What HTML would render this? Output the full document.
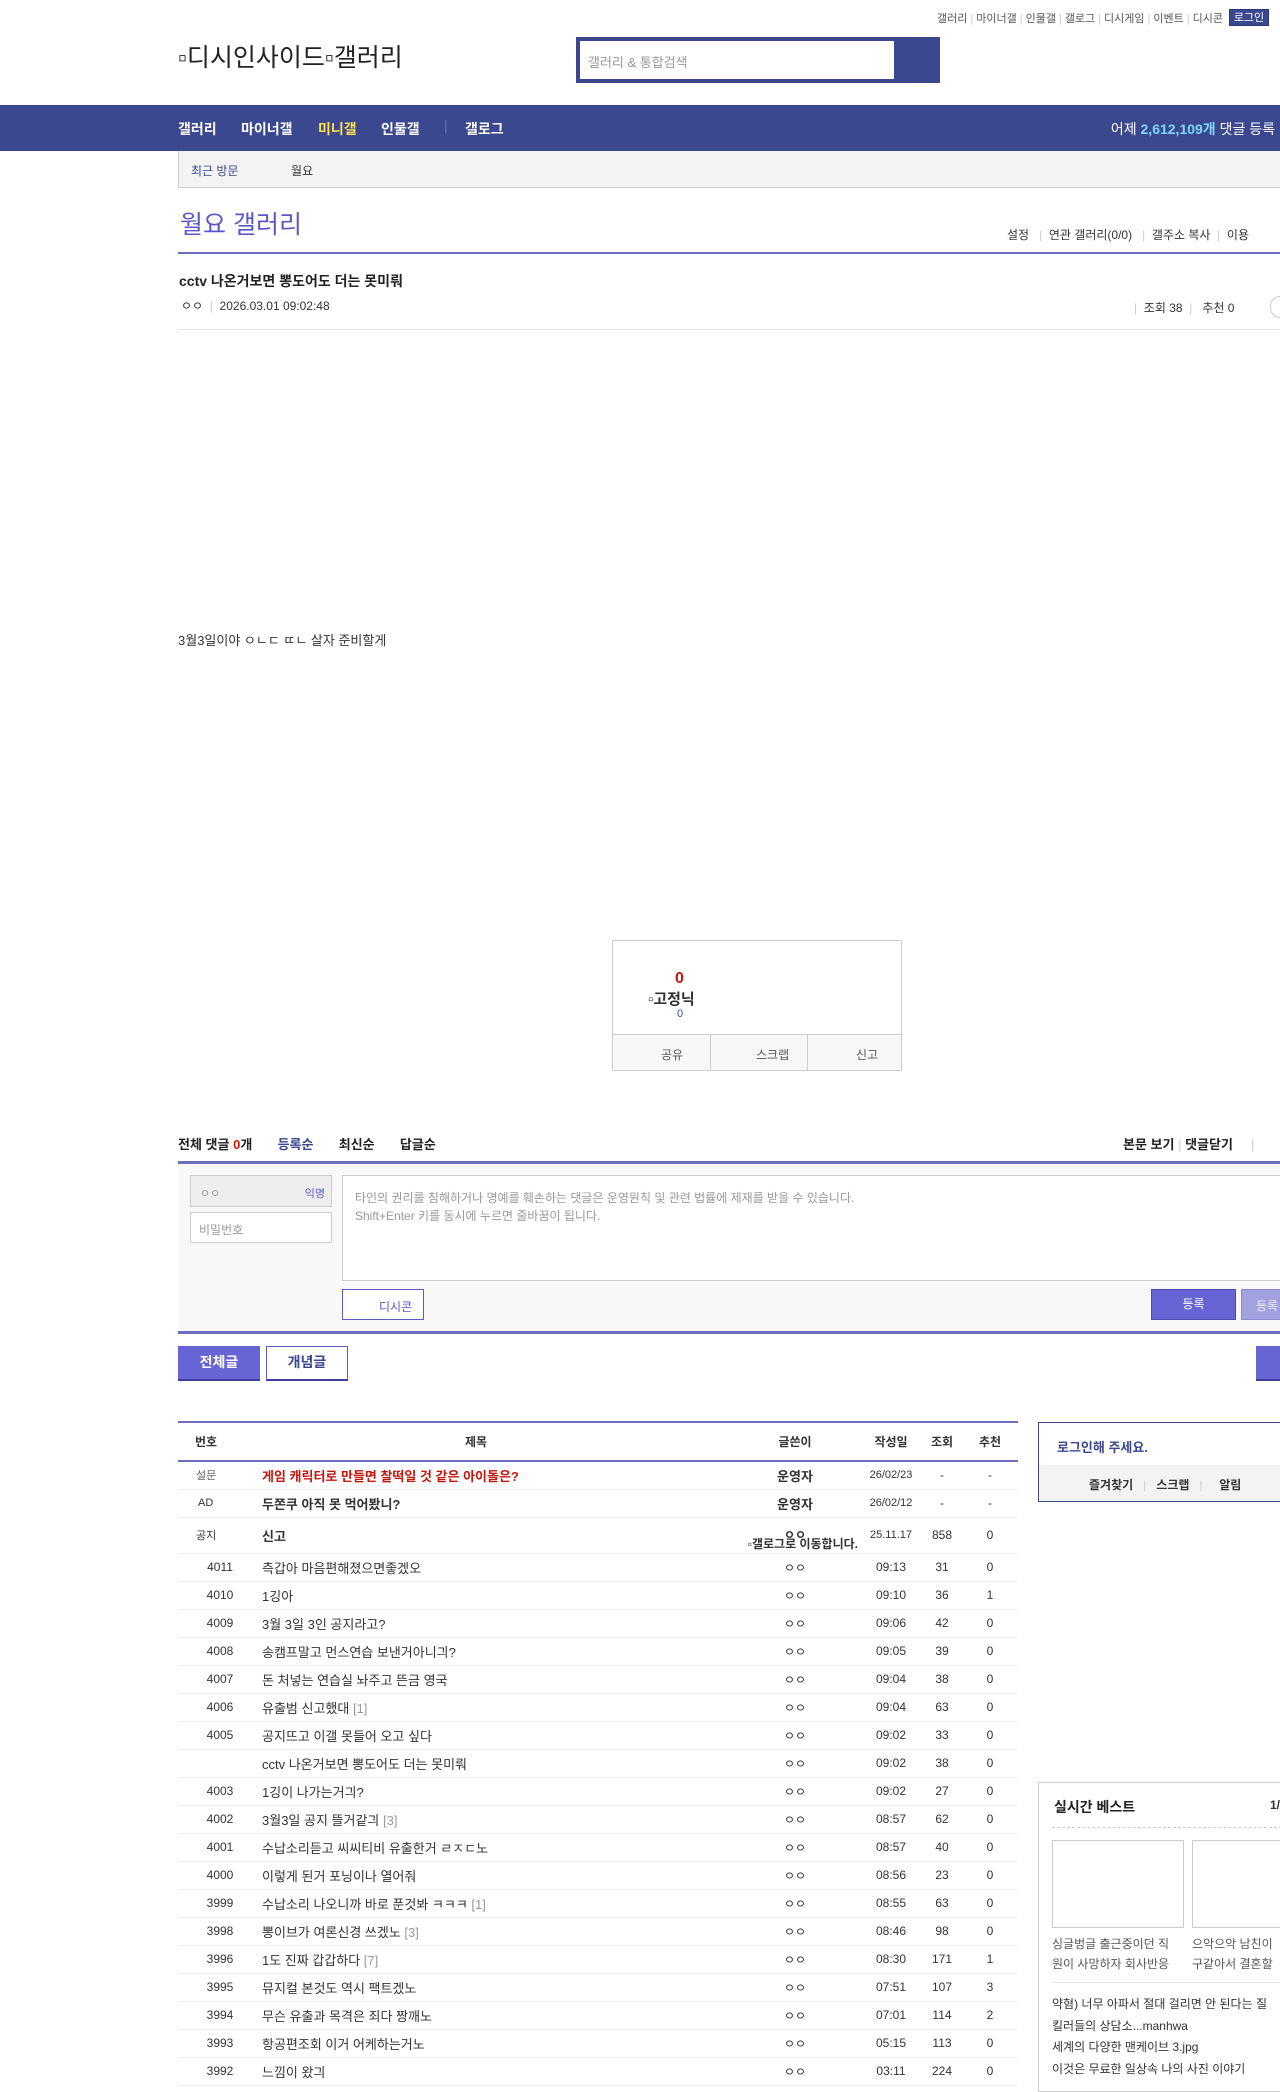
<!DOCTYPE html>
<html><head><meta charset="utf-8"><style>
*{margin:0;padding:0;box-sizing:border-box}
html,body{width:1280px;height:2084px;overflow:hidden;background:#fff;font-family:"Liberation Sans","Noto Sans CJK KR",sans-serif;color:#333;font-size:13px}
.a{position:absolute;white-space:nowrap}
.topl{top:10px;left:893px;font-size:11px;color:#555}
.topl span{margin:0 3px}
.sep{color:#ccc}
.login{top:9px;left:1229px;width:40px;height:17px;background:#3b4890;color:#fff;font-size:11px;text-align:center;line-height:17px;border:1px solid #29367c}
.logo{top:38px;left:178px;font-size:25px;color:#222}
.search{top:37px;left:576px;width:364px;height:46px;background:#3b4890}
.search div{position:absolute;left:4px;top:4px;width:314px;height:38px;background:#fff;color:#999;font-size:13px;padding:11px 8px}
.nav{top:105px;left:0;width:1280px;height:46px;background:#3b4890}
.nav span{position:absolute;top:14px;color:#fff;font-size:14px;font-weight:bold}
.sub{top:151px;left:178px;width:1110px;height:37px;background:#f3f3f3;border-left:1px solid #ccc;border-bottom:1px solid #ccc}
.title{top:205px;left:180px;font-size:25px;color:#5b58c8}
.hline{left:178px;width:1110px;background:#6e6cc0}
td{white-space:nowrap}
table{border-collapse:collapse;font-size:12px;table-layout:fixed}
.lt tr{height:28px;border-bottom:1px solid #eee}
.lt td{text-align:center;color:#333;overflow:visible}
.lt td.s{text-align:left;font-size:13px}
.gray{color:#999}
</style></head><body>
<div class="a topl" style="left:893px;width:330px;text-align:right">갤러리<span class="sep">|</span>마이너갤<span class="sep">|</span>인물갤<span class="sep">|</span>갤로그<span class="sep">|</span>디시게임<span class="sep">|</span>이벤트<span class="sep">|</span>디시콘</div>
<div class="a login">로그인</div>
<div class="a logo">▫디시인사이드▫갤러리</div>
<div class="a search"><div>갤러리 &amp; 통합검색</div></div>
<div class="a nav">
<span style="left:178px">갤러리</span><span style="left:241px">마이너갤</span><span style="left:318px;color:#ffe14c">미니갤</span><span style="left:381px">인물갤</span><span style="left:444px;top:12px;color:#6a76b8;font-weight:normal">|</span><span style="left:465px">갤로그</span>
<span style="left:1095px;width:180px;text-align:right;font-weight:normal">어제 <b style="color:#80d8ff">2,612,109개</b> 댓글 등록</span></div>
<div class="a sub"><span class="a" style="left:12px;top:11px;font-size:12px;color:#3b4890">최근 방문</span><span class="a" style="left:112px;top:11px;font-size:12px">월요</span></div>
<div class="a title">월요 갤러리</div>
<div class="a" style="top:226px;left:1007px;font-size:12px;color:#333">설정 &nbsp;&nbsp;<span class="sep">|</span>&nbsp; 연관 갤러리(0/0) &nbsp;&nbsp;<span class="sep">|</span>&nbsp; 갤주소 복사 &nbsp;<span class="sep">|</span>&nbsp; 이용</div>
<div class="a hline" style="top:252px;height:2px"></div>
<div class="a" style="top:271px;left:179px;font-size:14px;font-weight:bold;color:#222">cctv 나온거보면 뽕도어도 더는 못미뤄</div>
<div class="a" style="top:297px;left:181px;font-size:12px">ㅇㅇ <span class="sep">&nbsp;|&nbsp;</span> 2026.03.01 09:02:48</div>
<div class="a" style="top:299px;left:1134px;font-size:12px"><span class="sep">|</span>&nbsp; 조회 38 &nbsp;<span class="sep">|</span>&nbsp;&nbsp; 추천 0</div>
<div class="a" style="top:296px;left:1270px;width:20px;height:22px;border:1px solid #ccc;border-radius:11px"></div>
<div class="a" style="top:329px;left:178px;width:1110px;height:1px;background:#e5e5e5"></div>
<div class="a" style="top:630px;left:178px;font-size:13px">3월3일이야 ㅇㄴㄷ ㄸㄴ 살자 준비할게</div>

<div class="a" style="top:940px;left:612px;width:290px;height:131px;border:1px solid #ccc;border-radius:2px"></div>
<div class="a" style="top:970px;left:675px;font-size:16px;font-weight:bold;color:#c4170c">0</div>
<div class="a" style="top:988px;left:648px;font-size:15px;font-weight:bold;color:#333">▫고정닉</div>
<div class="a" style="top:1008px;left:677px;font-size:11px;color:#3b4890">0</div>
<div class="a" style="top:1034px;left:613px;width:288px;height:36px;background:#f7f7f7;border-top:1px solid #ccc;font-size:12px;color:#555">
<span class="a" style="left:48px;top:11px">공유</span><span class="a" style="left:97px;top:0;width:1px;height:36px;background:#ccc"></span><span class="a" style="left:143px;top:11px">스크랩</span><span class="a" style="left:194px;top:0;width:1px;height:36px;background:#ccc"></span><span class="a" style="left:243px;top:11px">신고</span></div>

<div class="a" style="top:1134px;left:178px;font-size:13px;font-weight:bold;color:#222">전체 댓글 <span style="color:#d31900">0</span>개 &nbsp;&nbsp;&nbsp;&nbsp;&nbsp;&nbsp;<span style="color:#3b4890">등록순</span> &nbsp;&nbsp;&nbsp;&nbsp;&nbsp;&nbsp;최신순 &nbsp;&nbsp;&nbsp;&nbsp;&nbsp;&nbsp;답글순</div>
<div class="a" style="top:1134px;left:1123px;font-size:13px;font-weight:bold;color:#222">본문 보기 <span class="sep" style="font-weight:normal">|</span> 댓글닫기 &nbsp;&nbsp;&nbsp;&nbsp;<span class="sep" style="font-weight:normal">|</span></div>
<div class="a hline" style="top:1161px;height:3px"></div>
<div class="a" style="top:1164px;left:178px;width:1110px;height:168px;background:#f8f8f8"></div>
<div class="a" style="top:1175px;left:190px;width:142px;height:32px;background:#eee;border:1px solid #ccc;font-size:11px;color:#999;padding:9px 9px">ㅇㅇ<span style="position:absolute;right:6px;color:#5b58c8">익명</span></div>
<div class="a" style="top:1212px;left:190px;width:142px;height:31px;background:#fff;border:1px solid #ccc;font-size:12px;color:#999;padding:8px 8px">비밀번호</div>
<div class="a" style="top:1175px;left:342px;width:960px;height:106px;background:#fff;border:1px solid #ccc;font-size:12px;color:#999;padding:13px 12px;line-height:18px">타인의 권리를 침해하거나 명예를 훼손하는 댓글은 운영원칙 및 관련 법률에 제재를 받을 수 있습니다.<br>Shift+Enter 키를 동시에 누르면 줄바꿈이 됩니다.</div>
<div class="a" style="top:1289px;left:342px;width:82px;height:31px;background:#fff;border:1px solid #5b58c8;font-size:12px;color:#5b58c8;padding:8px 0 0 36px">디시콘</div>
<div class="a" style="top:1289px;left:1151px;width:85px;height:31px;background:#6765d6;border:1px solid #4c4ab0;font-size:12px;color:#fff;text-align:center;line-height:29px">등록</div>
<div class="a" style="top:1289px;left:1241px;width:60px;height:31px;background:#a3a2e0;border:1px solid #8c8bd0;font-size:12px;color:#eef;padding:7px 0 0 14px">등록</div>
<div class="a hline" style="top:1331px;height:3px"></div>

<div class="a" style="top:1346px;left:178px;width:82px;height:35px;background:#6765d6;border-bottom:2px solid #3e3c9c;color:#fff;font-size:14px;font-weight:bold;text-align:center;line-height:33px">전체글</div>
<div class="a" style="top:1346px;left:266px;width:82px;height:35px;background:#fff;border:1px solid #5b58c8;border-bottom:2px solid #3e3c9c;color:#3b4890;font-size:14px;font-weight:bold;text-align:center;line-height:31px">개념글</div>
<div class="a" style="top:1346px;left:1256px;width:40px;height:35px;background:#6765d6;border-bottom:2px solid #3e3c9c"></div>

<div class="a" style="top:1421px;left:178px;width:840px;height:2px;background:#6e6cc0"></div>
<table class="a lt" style="top:1423px;left:178px;width:840px">
<colgroup><col style="width:84px"><col style="width:468px"><col style="width:130px"><col style="width:62px"><col style="width:40px"><col style="width:56px"></colgroup>
<tr style="height:38px;border-bottom:2px solid #6e6cc0;font-weight:bold"><td style="font-weight:bold;text-align:left;padding-left:17px">번호</td><td style="font-weight:bold;padding-right:40px">제목</td><td style="font-weight:bold">글쓴이</td><td style="font-weight:bold">작성일</td><td style="font-weight:bold">조회</td><td style="font-weight:bold">추천</td></tr>
<tr><td style="font-size:11px;color:#666;text-align:left;padding-left:18px">설문</td><td class="s" style="color:#c4170c;font-weight:bold">게임 캐릭터로 만들면 찰떡일 것 같은 아이돌은?</td><td style="font-weight:bold;font-size:13px">운영자</td><td style="font-size:11px">26/02/23</td><td>-</td><td>-</td></tr>
<tr><td style="font-size:11px;text-align:left;padding-left:20px">AD</td><td class="s" style="font-weight:bold">두쫀쿠 아직 못 먹어봤니?</td><td style="font-weight:bold;font-size:13px">운영자</td><td style="font-size:11px">26/02/12</td><td>-</td><td>-</td></tr>
<tr style="height:36px"><td style="font-size:11px;text-align:left;padding-left:18px">공지</td><td class="s" style="font-weight:bold">신고</td><td style="font-weight:bold;line-height:16px;position:relative"><div style="text-align:center">ㅇㅇ</div><div style="position:absolute;right:2px;top:18px">▫갤로그로 이동합니다.</div></td><td style="font-size:11px">25.11.17</td><td>858</td><td>0</td></tr>
<tr><td>4011</td><td class="s">측갑아 마음편해졌으면좋겠오</td><td>ㅇㅇ</td><td>09:13</td><td>31</td><td>0</td></tr>
<tr><td>4010</td><td class="s">1깅아</td><td>ㅇㅇ</td><td>09:10</td><td>36</td><td>1</td></tr>
<tr><td>4009</td><td class="s">3월 3일 3인 공지라고?</td><td>ㅇㅇ</td><td>09:06</td><td>42</td><td>0</td></tr>
<tr><td>4008</td><td class="s">송캠프말고 먼스연습 보낸거아니긔?</td><td>ㅇㅇ</td><td>09:05</td><td>39</td><td>0</td></tr>
<tr><td>4007</td><td class="s">돈 처넣는 연습실 놔주고 뜬금 영국</td><td>ㅇㅇ</td><td>09:04</td><td>38</td><td>0</td></tr>
<tr><td>4006</td><td class="s">유출범 신고했대 <span class="gray">[1]</span></td><td>ㅇㅇ</td><td>09:04</td><td>63</td><td>0</td></tr>
<tr><td>4005</td><td class="s">공지뜨고 이갤 못들어 오고 싶다</td><td>ㅇㅇ</td><td>09:02</td><td>33</td><td>0</td></tr>
<tr><td></td><td class="s">cctv 나온거보면 뽕도어도 더는 못미뤄</td><td>ㅇㅇ</td><td>09:02</td><td>38</td><td>0</td></tr>
<tr><td>4003</td><td class="s">1깅이 나가는거긔?</td><td>ㅇㅇ</td><td>09:02</td><td>27</td><td>0</td></tr>
<tr><td>4002</td><td class="s">3월3일 공지 뜰거같긔 <span class="gray">[3]</span></td><td>ㅇㅇ</td><td>08:57</td><td>62</td><td>0</td></tr>
<tr><td>4001</td><td class="s">수납소리듣고 씨씨티비 유출한거 ㄹㅈㄷ노</td><td>ㅇㅇ</td><td>08:57</td><td>40</td><td>0</td></tr>
<tr><td>4000</td><td class="s">이렇게 된거 포닝이나 열어줘</td><td>ㅇㅇ</td><td>08:56</td><td>23</td><td>0</td></tr>
<tr><td>3999</td><td class="s">수납소리 나오니까 바로 푼것봐 ㅋㅋㅋ <span class="gray">[1]</span></td><td>ㅇㅇ</td><td>08:55</td><td>63</td><td>0</td></tr>
<tr><td>3998</td><td class="s">뽕이브가 여론신경 쓰겠노 <span class="gray">[3]</span></td><td>ㅇㅇ</td><td>08:46</td><td>98</td><td>0</td></tr>
<tr><td>3996</td><td class="s">1도 진짜 갑갑하다 <span class="gray">[7]</span></td><td>ㅇㅇ</td><td>08:30</td><td>171</td><td>1</td></tr>
<tr><td>3995</td><td class="s">뮤지컬 본것도 역시 팩트겠노</td><td>ㅇㅇ</td><td>07:51</td><td>107</td><td>3</td></tr>
<tr><td>3994</td><td class="s">무슨 유출과 목격은 죄다 짱깨노</td><td>ㅇㅇ</td><td>07:01</td><td>114</td><td>2</td></tr>
<tr><td>3993</td><td class="s">항공편조회 이거 어케하는거노</td><td>ㅇㅇ</td><td>05:15</td><td>113</td><td>0</td></tr>
<tr><td>3992</td><td class="s">느낌이 왔긔</td><td>ㅇㅇ</td><td>03:11</td><td>224</td><td>0</td></tr>
</table>

<div class="a" style="top:1422px;left:1038px;width:260px;height:80px;border:1px solid #3b4890;border-right:none"></div>
<div class="a" style="top:1437px;left:1057px;font-size:13px;font-weight:bold;color:#3b4890">로그인해 주세요.</div>
<div class="a" style="top:1465px;left:1039px;width:250px;height:36px;background:#f3f3f3;font-size:12px;font-weight:bold;color:#333"><span class="a" style="left:50px;top:11px">즐겨찾기 &nbsp;&nbsp;<span class="sep" style="font-weight:normal">|</span>&nbsp;&nbsp; 스크랩 &nbsp;&nbsp;<span class="sep" style="font-weight:normal">|</span>&nbsp;&nbsp;&nbsp;&nbsp; 알림</span></div>

<div class="a" style="top:1782px;left:1038px;width:260px;height:310px;border:1px solid #ccc"></div>
<div class="a" style="top:1797px;left:1054px;font-size:14px;font-weight:bold;color:#222">실시간 베스트</div>
<div class="a" style="top:1798px;left:1270px;font-size:12px;font-weight:bold">1/</div>
<div class="a" style="top:1827px;left:1052px;width:240px;border-top:1px dashed #ccc"></div>
<div class="a" style="top:1840px;left:1052px;width:132px;height:88px;border:1px solid #ccc"></div>
<div class="a" style="top:1840px;left:1192px;width:132px;height:88px;border:1px solid #ccc"></div>
<div class="a" style="top:1934px;left:1052px;font-size:12px;color:#555;line-height:20px">싱글벙글 출근중이던 직<br>원이 사망하자 회사반응</div>
<div class="a" style="top:1934px;left:1192px;font-size:12px;color:#555;line-height:20px">으악으악 남친이<br>구같아서 결혼할</div>
<div class="a" style="top:1982px;left:1052px;width:240px;border-top:1px solid #e5e5e5"></div>
<div class="a" style="top:1994px;left:1052px;font-size:12px;color:#333;line-height:21.5px">약혐) 너무 아파서 절대 걸리면 안 된다는 질<br>킬러들의 상담소...manhwa<br>세계의 다양한 맨케이브 3.jpg<br>이것은 무료한 일상속 나의 사진 이야기</div>
</body></html>
